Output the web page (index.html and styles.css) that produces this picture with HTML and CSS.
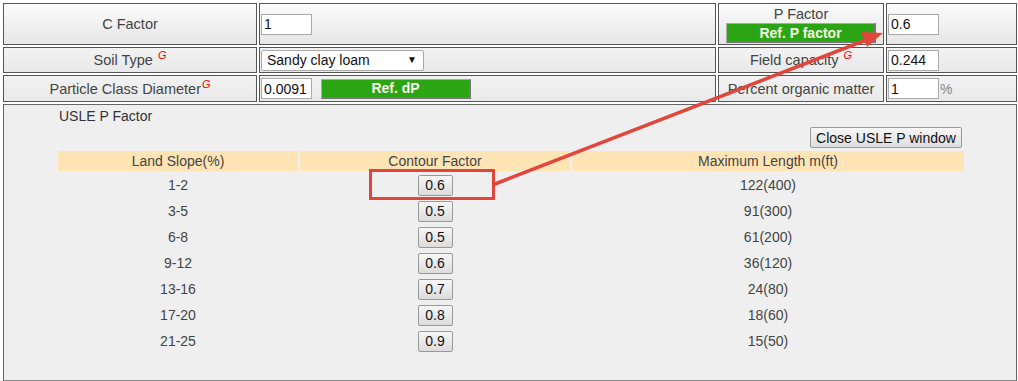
FILE: index.html
```html
<!DOCTYPE html>
<html lang="en">
<head>
    <meta charset="UTF-8">
    <title>USLE P Factor</title>
    <link rel="stylesheet" href="styles.css">
</head>
<body>

    <div class="sheet">
        <!-- Row 1 -->
        <div class="cell label top">C Factor</div>
        <div class="cell field top"><input type="text" class="num" value="1"></div>
        <div class="cell label top pcell">
            <div>P Factor</div>
            <button class="ref">Ref. P factor</button>
        </div>
        <div class="cell field top"><input type="text" class="num" value="0.6"></div>

        <!-- Row 2 -->
        <div class="cell label"><span>Soil Type <sup class="g">G</sup></span></div>
        <div class="cell field">
            <div class="select-wrap">
                <select class="soil">
                    <option>Sandy clay loam</option>
                </select>
            </div>
        </div>
        <div class="cell label"><span>Field capacity <sup class="g">G</sup></span></div>
        <div class="cell field"><input type="text" class="num" value="0.244"></div>

        <!-- Row 3 -->
        <div class="cell label"><span>Particle Class Diameter<sup class="g">G</sup></span></div>
        <div class="cell field">
            <input type="text" class="num" value="0.0091">
            <button class="ref dp">Ref. dP</button>
        </div>
        <div class="cell label">Percent organic matter</div>
        <div class="cell field"><input type="text" class="num" value="1"><span class="pct">%</span></div>

        <!-- USLE P window -->
        <div class="panel">
            <div class="inner">
                <div class="title">USLE P Factor</div>
                <div class="close-row"><button class="close">Close USLE P window</button></div>
                <table class="ptable">
                    <colgroup>
                        <col class="c1"><col class="c2"><col class="c3">
                    </colgroup>
                    <tr>
                        <th>Land Slope(%)</th>
                        <th>Contour Factor</th>
                        <th>Maximum Length m(ft)</th>
                    </tr>
                    <tr><td>1-2</td><td><button class="pick">0.6</button></td><td>122(400)</td></tr>
                    <tr><td>3-5</td><td><button class="pick">0.5</button></td><td>91(300)</td></tr>
                    <tr><td>6-8</td><td><button class="pick">0.5</button></td><td>61(200)</td></tr>
                    <tr><td>9-12</td><td><button class="pick">0.6</button></td><td>36(120)</td></tr>
                    <tr><td>13-16</td><td><button class="pick">0.7</button></td><td>24(80)</td></tr>
                    <tr><td>17-20</td><td><button class="pick">0.8</button></td><td>18(60)</td></tr>
                    <tr><td>21-25</td><td><button class="pick">0.9</button></td><td>15(50)</td></tr>
                </table>
            </div>
        </div>
    </div>

    <!-- annotation drawn over the screenshot -->
    <svg class="note" width="1018" height="381" viewBox="0 0 1018 381">
        <rect x="370.5" y="170.5" width="123" height="28" fill="none" stroke="#e2453c" stroke-width="3"/>
        <line x1="495" y1="184" x2="866" y2="40" stroke="#e2453c" stroke-width="3.5" stroke-linecap="round"/>
        <polygon points="883,33 867,47 861,32" fill="#e2453c"/>
    </svg>

</body>
</html>
```

FILE: styles.css
```css
body {
    margin: 0;
    font-family: "Liberation Sans", Arial, sans-serif;
    font-size: 14px;
    color: #444;
    background: #fff;
    position: relative;
}

.sheet {
    display: grid;
    grid-template-columns: 254px 457px 166px 131px;
    grid-template-rows: 42px 26px 27px 277px;
    gap: 2px;
    padding: 3px 0 0 3px;
    width: 1018px;
    box-sizing: border-box;
}

.cell {
    border: 1px solid #555;
    box-sizing: border-box;
    background: linear-gradient(#f2f2f2, #e9e9e9);
    display: flex;
    align-items: center;
}

.cell.top {
    background: linear-gradient(#fbfbfb, #e6e6e6);
}

.label {
    justify-content: center;
    font-size: 14.5px;
}

.field {
    padding-left: 1px;
}

.pcell {
    flex-direction: column;
    justify-content: flex-start;
    padding-top: 2px;
    gap: 1px;
}

.g {
    color: #f00;
    font-style: italic;
    font-size: 11px;
    margin-left: 1px;
    vertical-align: 6px;
    line-height: 0;
}

input.num {
    width: 51px;
    height: 21px;
    box-sizing: border-box;
    border: 1px solid #aaa;
    background: #fff;
    font-family: "Liberation Sans", Arial, sans-serif;
    font-size: 14px;
    color: #111;
    padding: 0 2px;
    margin: 0;
}

.pct {
    color: #888;
    margin-left: 1px;
}

.select-wrap {
    position: relative;
    width: 163px;
    height: 21px;
}

.select-wrap::after {
    content: "\25BC";
    position: absolute;
    right: 7px;
    top: 4px;
    font-size: 10px;
    color: #111;
    pointer-events: none;
}

select.soil {
    appearance: none;
    -webkit-appearance: none;
    width: 163px;
    height: 21px;
    border: 1px solid #aaa;
    border-radius: 2px;
    background: #fff;
    font-family: "Liberation Sans", Arial, sans-serif;
    font-size: 14px;
    color: #111;
    padding: 0 5px;
    margin: 0;
}

button.ref {
    width: 150px;
    height: 20px;
    box-sizing: border-box;
    background: #2ca515;
    border-style: solid;
    border-width: 1px 2px 2px 1px;
    border-color: #aaa #777 #777 #aaa;
    color: #f4f6e6;
    font-family: "Liberation Sans", Arial, sans-serif;
    font-weight: bold;
    font-size: 14px;
    padding: 0;
    line-height: 16px;
}

button.dp {
    margin-left: 9px;
}

.panel {
    grid-column: 1 / -1;
    border: 1px solid #666;
    border-bottom-color: #888;
    background: #efefef;
    box-sizing: border-box;
    padding: 3px 0 0 52px;
}

.inner {
    width: 910px;
}

.title {
    line-height: 17px;
    padding-left: 3px;
    color: #333;
}

.close-row {
    display: flex;
    justify-content: flex-end;
    margin-top: 2px;
    padding-right: 4px;
}

button.close {
    width: 152px;
    height: 21px;
    box-sizing: border-box;
    border: 1px solid #999;
    border-radius: 2px;
    background: linear-gradient(#f7f7f7, #dedede);
    font-family: "Liberation Sans", Arial, sans-serif;
    font-size: 14px;
    color: #111;
    padding: 0;
}

.ptable {
    border-collapse: separate;
    border-spacing: 2px;
    margin-top: 1px;
    width: 910px;
    table-layout: fixed;
}

.ptable col.c1 { width: 240px; }
.ptable col.c2 { width: 270px; }
.ptable col.c3 { width: 392px; }

.ptable th {
    background: #ffe4b5;
    font-weight: normal;
    height: 20px;
    padding: 0;
    color: #444;
}

.ptable td {
    text-align: center;
    height: 24px;
    padding: 0;
    color: #444;
}

button.pick {
    width: 35px;
    height: 21px;
    box-sizing: border-box;
    border: 1px solid #999;
    border-radius: 2px;
    background: linear-gradient(#f7f7f7, #dcdcdc);
    font-family: "Liberation Sans", Arial, sans-serif;
    font-size: 14px;
    color: #111;
    padding: 0;
    vertical-align: middle;
}

.note {
    position: absolute;
    left: 0;
    top: 0;
    pointer-events: none;
}
```
